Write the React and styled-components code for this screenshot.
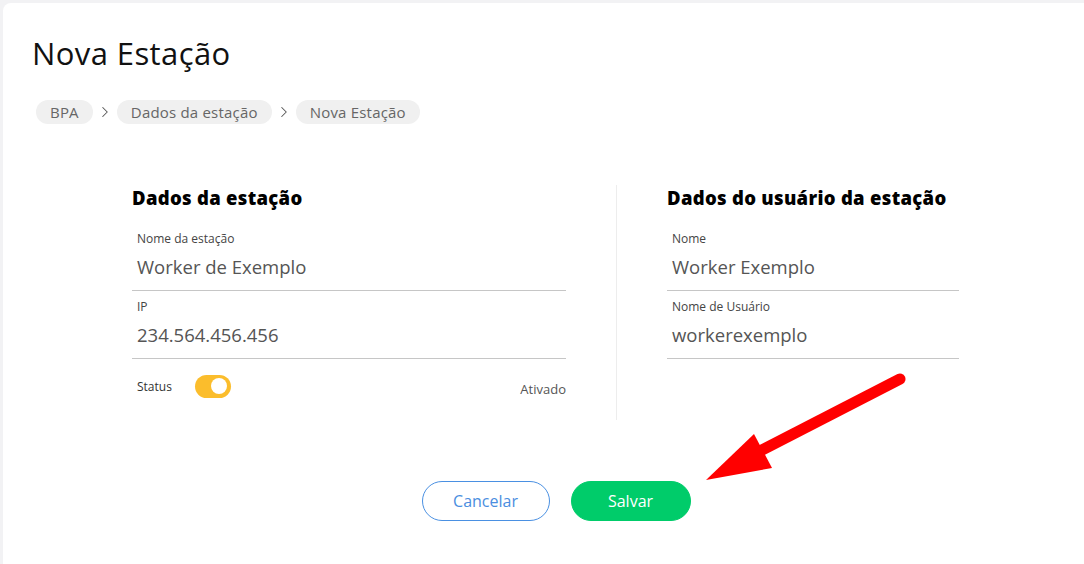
import React from 'react';
import styled, { createGlobalStyle } from 'styled-components';
import { ChevronRight } from 'lucide-react';

const GlobalStyle = createGlobalStyle`
  html, body {
    margin: 0;
    padding: 0;
    background: #f2f2f4;
    font-family: 'Open Sans', 'Noto Sans', sans-serif;
  }
  * { box-sizing: border-box; }
`;

const Page = styled.div`
  position: relative;
  min-height: 100vh;
  padding: 3px 0 0 3px;
  overflow: hidden;
`;

const Card = styled.main`
  background: #fff;
  border-radius: 8px 0 0 0;
  min-height: calc(100vh - 3px);
  padding: 30px 0 0 29px;
`;

const Title = styled.h1`
  margin: 0;
  font-size: 31px;
  line-height: 40px;
  font-weight: 400;
  letter-spacing: 0.4px;
  color: #111;
`;

const Crumbs = styled.nav`
  display: flex;
  align-items: center;
  gap: 3px;
  margin: 27px 0 0 4px;
  color: #666;
`;

const Chip = styled.span`
  height: 24px;
  line-height: 24px;
  padding: 0 14px;
  border-radius: 12px;
  background: #f0f0f0;
  font-size: 15px;
  letter-spacing: 0.2px;
  color: #666;
`;

const Form = styled.section`
  display: flex;
  margin: 61px 0 0 100px;
`;

const Column = styled.div`
  width: ${(p) => p.$width}px;
  padding: 1px 0 22px;
`;

const Divider = styled.div`
  width: 1px;
  background: #ededed;
  margin: 0 50px;
`;

const Heading = styled.h2`
  margin: 0 0 13px;
  font-size: 18.5px;
  line-height: 24px;
  font-weight: 800;
  letter-spacing: 0.3px;
  color: #000;
`;

const Field = styled.div`
  padding: 8px 5px 11px;
  border-bottom: 1px solid #c6c6c6;
`;

const Label = styled.div`
  font-size: 12px;
  line-height: 16px;
  color: #444;
`;

const Value = styled.div`
  margin-top: 8px;
  font-size: 18.5px;
  line-height: 24px;
  color: #555;
`;

const StatusRow = styled.div`
  display: flex;
  align-items: center;
  height: 24px;
  margin-top: 15px;
  padding-left: 5px;
`;

const StatusLabel = styled.span`
  font-size: 12px;
  color: #333;
`;

const Toggle = styled.span`
  position: relative;
  width: 36px;
  height: 23px;
  margin-left: 23px;
  border-radius: 12px;
  background: #fbbd2c;

  &::after {
    content: '';
    position: absolute;
    top: 3.5px;
    right: 4px;
    width: 16px;
    height: 16px;
    border-radius: 50%;
    background: #fff;
  }
`;

const StatusValue = styled.span`
  margin-left: auto;
  padding-top: 6px;
  font-size: 13px;
  color: #555;
`;

const Actions = styled.div`
  display: flex;
  justify-content: center;
  gap: 21px;
  margin-top: 61px;
  padding-right: 4px;
`;

const Button = styled.button`
  height: 40px;
  width: ${(p) => p.$width}px;
  border-radius: 20px;
  font-family: inherit;
  font-size: 16px;
  cursor: pointer;
  border: 1px solid ${(p) => (p.$primary ? '#00cc6a' : '#4a90e2')};
  background: ${(p) => (p.$primary ? '#00cc6a' : '#fff')};
  color: ${(p) => (p.$primary ? '#fff' : '#4a8ee0')};
  font-weight: ${(p) => (p.$primary ? 500 : 400)};
`;

const Annotation = styled.svg`
  position: absolute;
  top: 0;
  left: 0;
  pointer-events: none;
`;

function TextField({ label, value }) {
  return (
    <Field>
      <Label>{label}</Label>
      <Value>{value}</Value>
    </Field>
  );
}

export default function App() {
  return (
    <Page>
      <GlobalStyle />
      <Card>
        <Title>Nova Estação</Title>
        <Crumbs>
          <Chip>BPA</Chip>
          <ChevronRight size={18} strokeWidth={1.4} color="#555" />
          <Chip>Dados da estação</Chip>
          <ChevronRight size={18} strokeWidth={1.4} color="#555" />
          <Chip>Nova Estação</Chip>
        </Crumbs>

        <Form>
          <Column $width={434}>
            <Heading>Dados da estação</Heading>
            <TextField label="Nome da estação" value="Worker de Exemplo" />
            <TextField label="IP" value="234.564.456.456" />
            <StatusRow>
              <StatusLabel>Status</StatusLabel>
              <Toggle />
              <StatusValue>Ativado</StatusValue>
            </StatusRow>
          </Column>
          <Divider />
          <Column $width={292}>
            <Heading>Dados do usuário da estação</Heading>
            <TextField label="Nome" value="Worker Exemplo" />
            <TextField label="Nome de Usuário" value="workerexemplo" />
          </Column>
        </Form>

        <Actions>
          <Button $width={128}>Cancelar</Button>
          <Button $width={120} $primary>Salvar</Button>
        </Actions>
      </Card>

      <Annotation width="1084" height="564" viewBox="0 0 1084 564">
        <line x1="900" y1="379" x2="762" y2="450" stroke="#ff0000" strokeWidth="11" strokeLinecap="round" />
        <polygon points="706,480 754,434 772,468" fill="#ff0000" />
      </Annotation>
    </Page>
  );
}
